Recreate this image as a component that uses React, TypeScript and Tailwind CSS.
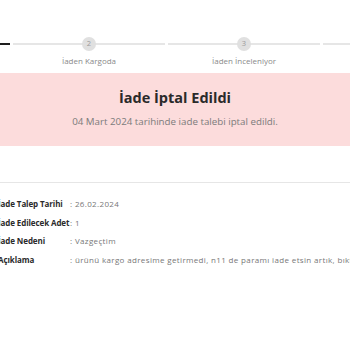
import React from 'react';

const steps = [
  { no: 1, label: 'İade Talebi Oluşturuldu', done: true },
  { no: 2, label: 'İaden Kargoda', done: false },
  { no: 3, label: 'İaden İnceleniyor', done: false },
  { no: 4, label: 'İade Sonuçlandı', done: false },
];

const details = [
  { label: 'İade Talep Tarihi', value: '26.02.2024' },
  { label: 'İade Edilecek Adet', value: '1' },
  { label: 'İade Nedeni', value: 'Vazgeçtim' },
  { label: 'Açıklama', value: 'ürünü kargo adresime getirmedi, n11 de paramı iade etsin artık, bıktım' },
];

function App() {
  return (
    <div className="w-[350px] h-[350px] overflow-hidden bg-white font-['Open_Sans',sans-serif]">
      <div className="h-[37px]" />

      {/* steps */}
      <div className="flex gap-[3px] ml-[-142px] w-max">
        {steps.map((s) => (
          <div key={s.no} className="w-[152px] flex flex-col items-center">
            <div className="relative w-full h-[14px] flex items-center justify-center">
              <div className={s.done ? 'absolute inset-x-0 h-[2px] bg-[#1e1e1e]' : 'absolute inset-x-0 h-[2px] bg-[#e6e6e6]'} />
              {!s.done && (
                <div className="relative w-[14px] h-[14px] rounded-full bg-[#e0e0e0] flex items-center justify-center text-[7.5px] leading-none text-[#9a9a9a]">
                  {s.no}
                </div>
              )}
            </div>
            <div className="mt-[4px] text-[8px] leading-[11px] text-[#8a8a8a] whitespace-nowrap">{s.label}</div>
          </div>
        ))}
      </div>

      {/* cancelled banner */}
      <div className="mt-[7px] h-[73px] bg-[#fcdcdc] flex flex-col items-center">
        <div className="mt-[15px] text-[14.5px] leading-[20px] font-bold text-[#2a2a2a]">İade İptal Edildi</div>
        <div className="mt-[7px] text-[9.75px] leading-[13px] text-[#7b7b7b]">04 Mart 2024 tarihinde iade talebi iptal edildi.</div>
      </div>

      <div className="mt-[36px] h-px bg-[#e6e6e6]" />

      {/* details */}
      <div className="mt-[15px] ml-[-2px] flex flex-col gap-[6.7px]">
        {details.map((d) => (
          <div key={d.label} className="flex items-center h-[12px] whitespace-nowrap">
            <div className="min-w-[72px] text-[8px] tracking-[-0.1px] font-bold text-[#2b2b2b]">{d.label}</div>
            <div className="text-[8px] tracking-[0.35px] text-[#777]">: {d.value}</div>
          </div>
        ))}
      </div>
    </div>
  );
}

export default App;
